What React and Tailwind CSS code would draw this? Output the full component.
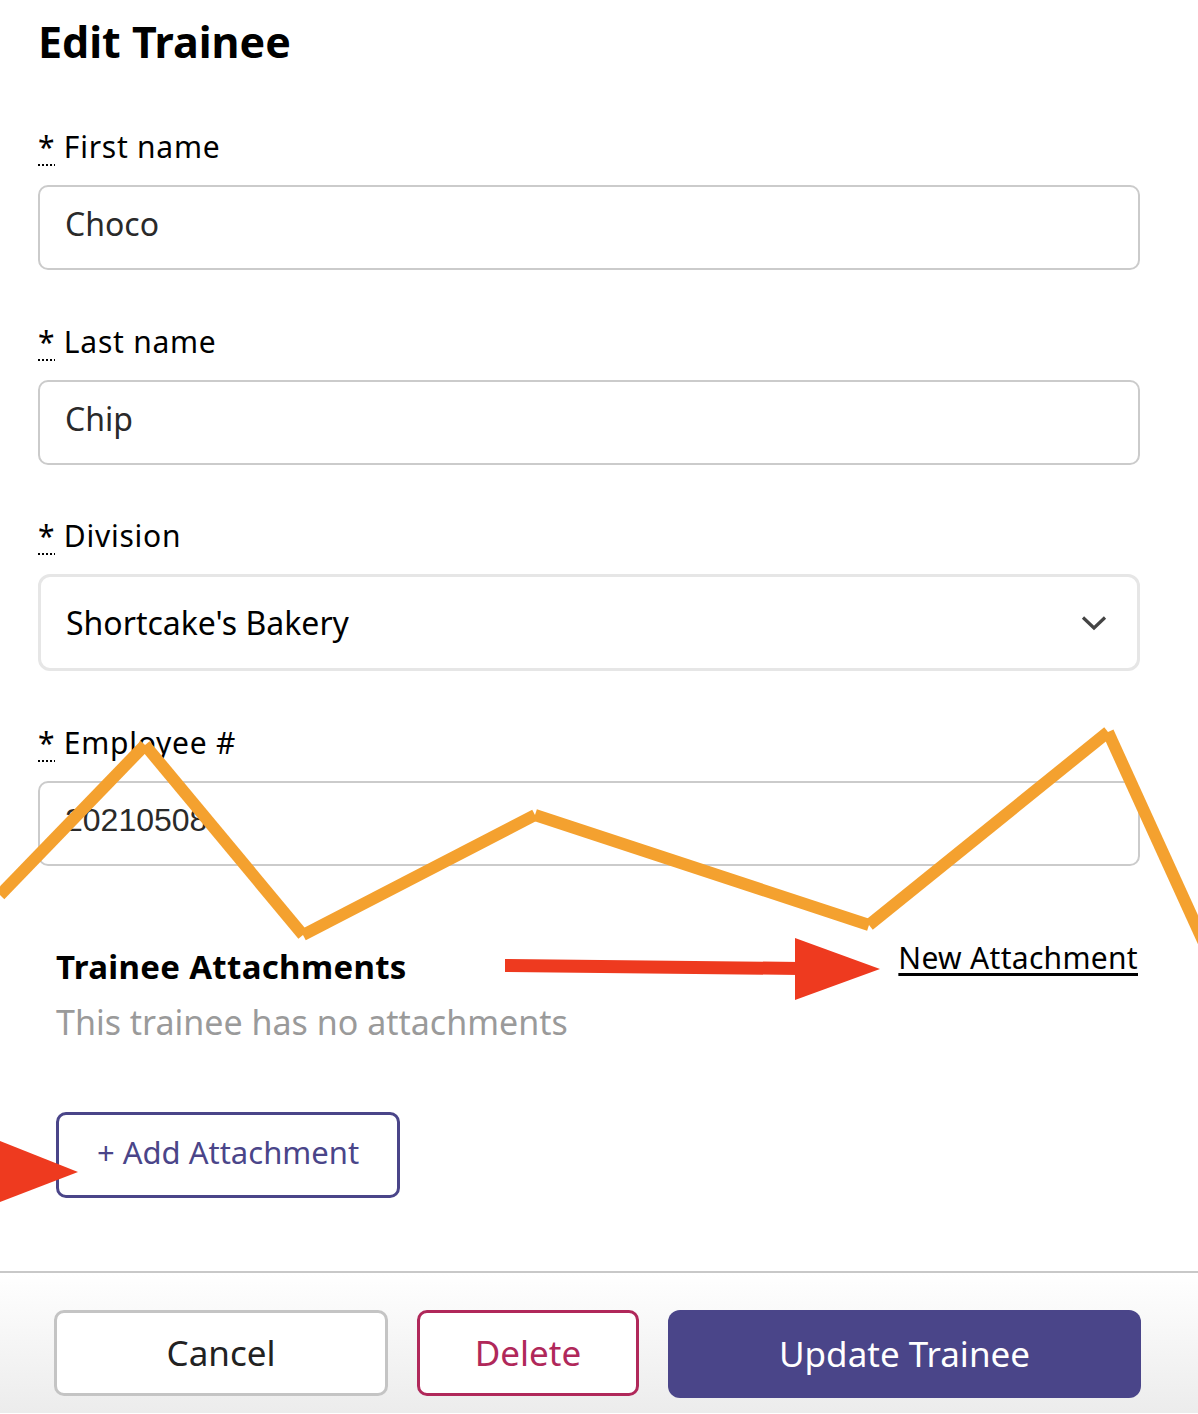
const font = "font-['Noto_Sans',sans-serif]";

function Label({ children }) {
  return (
    <label className="block text-[30px] leading-[34px] tracking-[0.025em] text-black">
      <abbr title="required" className="no-underline">
        <span className="underline decoration-dotted decoration-2 underline-offset-[6px]">*</span>
      </abbr>{' '}
      {children}
    </label>
  );
}

function TextInput({ value, className = '' }) {
  return (
    <div
      className={`mt-[21px] h-[85px] rounded-[10px] border-2 border-[#cbcbcb] bg-white pl-[25px] pb-[8px] flex items-center text-[32px] text-[#2a2a2a] ${className}`}
    >
      {value}
    </div>
  );
}

function Annotations() {
  const orange = [
    [0, 895, 145, 745],
    [145, 745, 303, 935],
    [303, 935, 535, 815],
    [535, 815, 869, 925],
    [869, 925, 1108, 732],
    [1108, 732, 1210, 956],
  ];
  return (
    <svg
      className="absolute inset-0 pointer-events-none"
      width="1198"
      height="1414"
      viewBox="0 0 1198 1414"
    >
      {orange.map(([x1, y1, x2, y2], i) => (
        <line
          key={i}
          x1={x1}
          y1={y1}
          x2={x2}
          y2={y2}
          stroke="#f4a12f"
          strokeWidth="12"
          strokeLinecap="butt"
        />
      ))}
      <polygon points="505,959 800,962 800,975 505,972" fill="#ee3a1f" />
      <polygon points="795,938 880,969 795,1000" fill="#ee3a1f" />
      <polygon points="0,1141 78,1172 0,1202" fill="#ee3a1f" />
    </svg>
  );
}

export default function App() {
  return (
    <div className={`relative w-[1198px] h-[1414px] overflow-hidden bg-white text-black ${font}`}>
      <div className="pl-[38px] pr-[58px] pt-[17px]">
        <h1 className="text-[43px] leading-[50px] font-bold">Edit Trainee</h1>

        <div className="mt-[63px]">
          <Label>First name</Label>
          <TextInput value="Choco" />
        </div>

        <div className="mt-[55px]">
          <Label>Last name</Label>
          <TextInput value="Chip" />
        </div>

        <div className="mt-[54px]">
          <Label>Division</Label>
          <div className="mt-[21px] h-[97px] rounded-[12px] border-[3px] border-[#e6e6e6] bg-white pl-[25px] pr-[30px] flex items-center justify-between">
            <span className="text-[32px] text-black">Shortcake's Bakery</span>
            <svg width="26" height="16" viewBox="0 0 26 16" fill="none">
              <path d="M2 2.5 L13 13 L24 2.5" stroke="#444" strokeWidth="3.2" />
            </svg>
          </div>
        </div>

        <div className="mt-[55px]">
          <Label>Employee #</Label>
          <TextInput
            value="20210508"
            className="font-['Liberation_Sans',sans-serif] pl-[24px]"
          />
        </div>

        <div className="mt-[75px] pl-[18px] pr-[2px]">
          <div className="flex justify-between items-start">
            <h2 className="mt-[6px] text-[33px] leading-[40px] tracking-[0.01em] font-bold">
              Trainee Attachments
            </h2>
            <a className="text-[30px] leading-[34px] tracking-[0.01em] text-black underline underline-offset-[4px]">
              New Attachment
            </a>
          </div>
          <p className="mt-[15px] text-[34px] leading-[40px] text-[#9a9a9a]">
            This trainee has no attachments
          </p>
          <button className="mt-[70px] w-[344px] h-[86px] rounded-[10px] border-[3px] border-[#4a4589] bg-white pb-[6px] text-[31px] text-[#4a4589]">
            + Add Attachment
          </button>
        </div>
      </div>

      <div className="mt-[73px] border-t-2 border-[#c8c8c8]" />

      <div className="h-[140px] bg-gradient-to-b from-white to-[#ececec] pl-[54px] pt-[37px] flex gap-[29px] items-start">
        <button className="w-[334px] h-[86px] rounded-[10px] border-[3px] border-[#c4c4c4] bg-white text-[35px] text-[#222]">
          Cancel
        </button>
        <button className="w-[222px] h-[86px] rounded-[10px] border-[3px] border-[#b0285a] bg-white text-[35px] text-[#b0285a]">
          Delete
        </button>
        <button className="w-[473px] h-[88px] rounded-[12px] bg-[#4a4589] text-[35px] text-white">
          Update Trainee
        </button>
      </div>

      <Annotations />
    </div>
  );
}
